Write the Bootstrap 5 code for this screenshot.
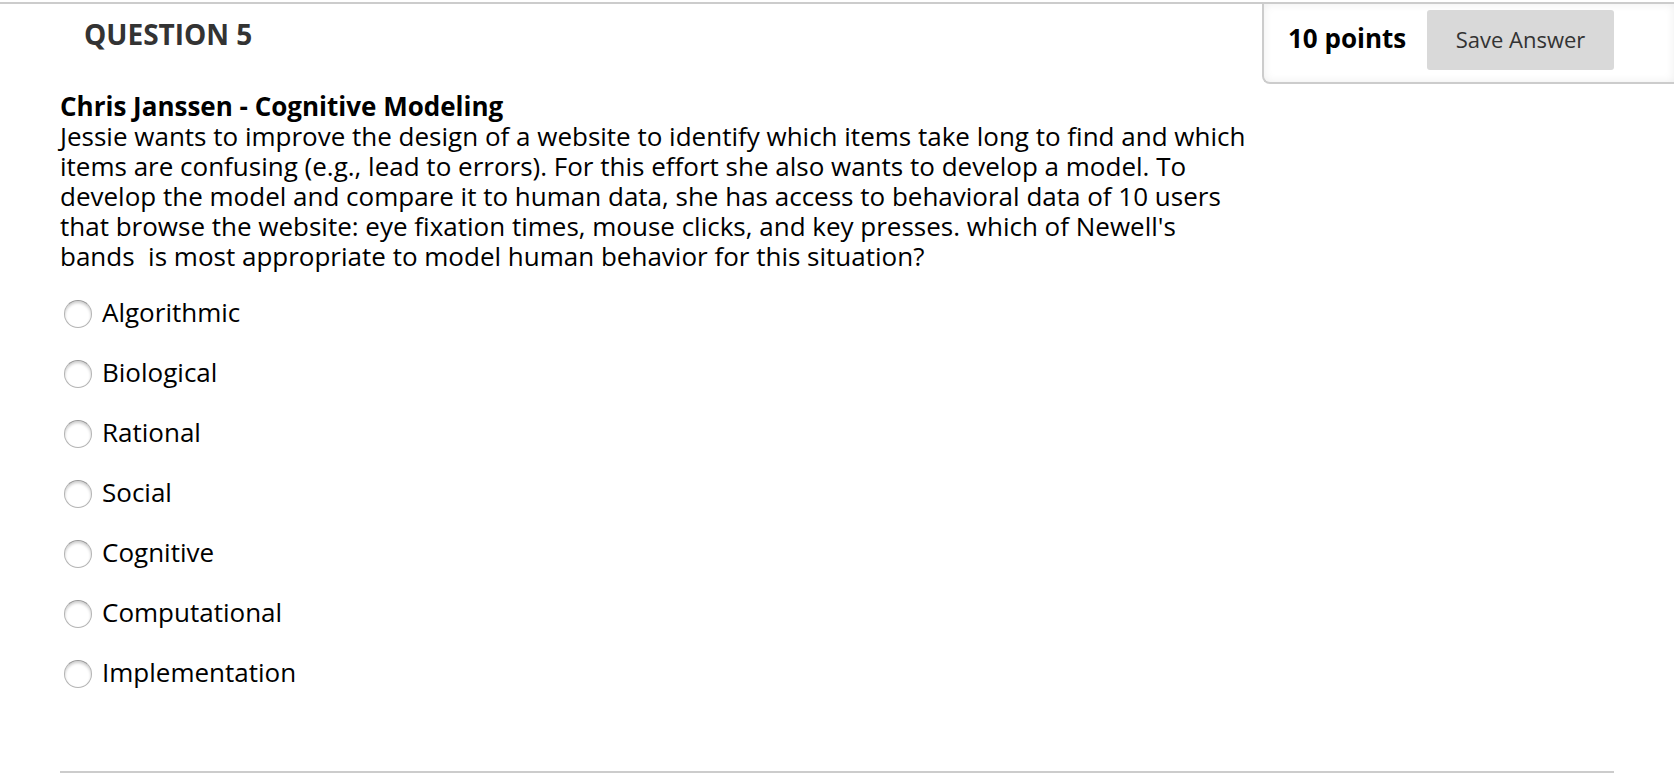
<!DOCTYPE html>
<html lang="en">
<head>
<meta charset="utf-8">
<meta name="viewport" content="width=device-width, initial-scale=1">
<title>Question 5</title>
<link href="https://cdn.jsdelivr.net/npm/bootstrap@5.3.0/dist/css/bootstrap.min.css" rel="stylesheet">
<style>
body{font-family:"Open Sans","Noto Sans",sans-serif;font-size:26px;line-height:30px;color:#000;background:#fff}
main{padding-top:2px}
.question-top{border-top:2px solid #ccc;padding-left:60px}
.question-title{font-size:28px;line-height:36px;font-weight:700;color:#333;margin:12px 0 0 24px}
.points-box{width:412px;height:80px;border:2px solid #ccc;border-width:0 0 2px 2px;border-bottom-left-radius:8px;padding:6px 60px 0 24px;box-shadow:inset 0 0 10px rgba(0,0,0,.07)}
.points-label{font-weight:700;line-height:56px}
.save-btn{width:187px;height:60px;background:#d9d9d9;color:#333;font-size:22px;border:0;border-radius:3px;padding:4px 12px 6px}
.question-body{margin:0 60px;padding-bottom:84px;border-bottom:2px solid #ccc}
.question-text{max-width:1200px;padding-top:7px;margin-bottom:26px}
.question-name{font-size:26px;line-height:30px;font-weight:700;margin:0}
.answers{gap:30px}
.answers>div{height:30px}
.answer-radio{appearance:none;width:28px;height:28px;border:1px solid #b4b4b4;border-top-color:#999;border-radius:50%;margin:3px 10px 0 4px;background:#fff;box-shadow:inset 0 2px 3px rgba(0,0,0,.2)}
.answer-radio:checked{background:radial-gradient(circle,#333 0 6px,#fff 7px)}
</style>
<script defer src="https://cdn.jsdelivr.net/npm/bootstrap@5.3.0/dist/js/bootstrap.bundle.min.js"></script>
</head>
<body>
<main>
<header class="question-top d-flex justify-content-between align-items-start">
<h1 class="question-title">QUESTION 5</h1>
<div class="points-box d-flex justify-content-between align-items-start"><span class="points-label">10 points</span><button type="button" class="btn save-btn">Save Answer</button></div>
</header>
<form class="question-body">
<div class="question-text"><h2 class="question-name">Chris Janssen - Cognitive Modeling</h2>
<p class="mb-0">Jessie wants to improve the design of a website to identify which items take long to find and which items are confusing (e.g., lead to errors). For this effort she also wants to develop a model. To develop the model and compare it to human data, she has access to behavioral data of 10 users that browse the website: eye fixation times, mouse clicks, and key presses. which of Newell's bands&nbsp; is most appropriate to model human behavior for this situation?</p></div>
<div class="answers d-flex flex-column" role="radiogroup" aria-label="Answers">
<div class="d-flex"><input class="answer-radio" type="radio" name="answer" id="a1"><label for="a1">Algorithmic</label></div>
<div class="d-flex"><input class="answer-radio" type="radio" name="answer" id="a2"><label for="a2">Biological</label></div>
<div class="d-flex"><input class="answer-radio" type="radio" name="answer" id="a3"><label for="a3">Rational</label></div>
<div class="d-flex"><input class="answer-radio" type="radio" name="answer" id="a4"><label for="a4">Social</label></div>
<div class="d-flex"><input class="answer-radio" type="radio" name="answer" id="a5"><label for="a5">Cognitive</label></div>
<div class="d-flex"><input class="answer-radio" type="radio" name="answer" id="a6"><label for="a6">Computational</label></div>
<div class="d-flex"><input class="answer-radio" type="radio" name="answer" id="a7"><label for="a7">Implementation</label></div>
</div>
</form>
</main>
</body>
</html>
